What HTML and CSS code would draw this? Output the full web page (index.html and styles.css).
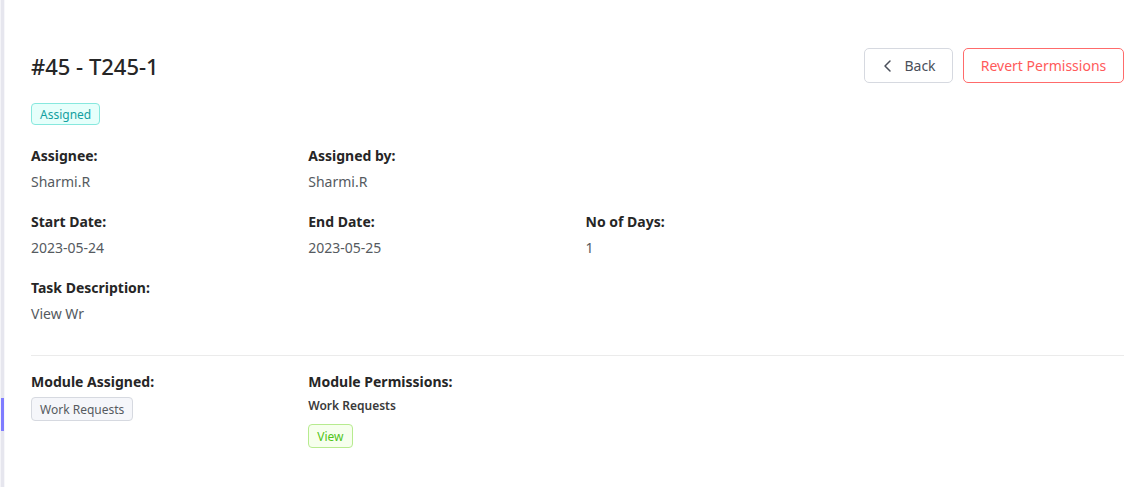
FILE: index.html
```html
<!DOCTYPE html>
<html>
<head>
<meta charset="utf-8">
<link rel="stylesheet" href="styles.css">
</head>
<body>
<div class="page">
  <div class="rail"><div class="rail-thumb"></div></div>
  <main class="main">
    <header class="header">
      <h1 class="title">#45 - T245-1</h1>
      <div class="actions">
        <button class="btn btn-back">
          <svg class="chev" width="14" height="14" viewBox="0 0 14 14"><path d="M9 2 L4 7 L9 12" fill="none" stroke="#4a4f5a" stroke-width="1.5" stroke-linecap="round" stroke-linejoin="round"/></svg>
          <span>Back</span>
        </button>
        <button class="btn btn-danger">Revert Permissions</button>
      </div>
    </header>
    <span class="tag tag-cyan">Assigned</span>

    <section class="grid">
      <div class="field"><div class="label">Assignee:</div><div class="value">Sharmi.R</div></div>
      <div class="field"><div class="label">Assigned by:</div><div class="value">Sharmi.R</div></div>
      <div class="field empty"></div>
      <div class="field empty"></div>

      <div class="field"><div class="label">Start Date:</div><div class="value">2023-05-24</div></div>
      <div class="field"><div class="label">End Date:</div><div class="value">2023-05-25</div></div>
      <div class="field"><div class="label">No of Days:</div><div class="value">1</div></div>
      <div class="field empty"></div>

      <div class="field"><div class="label">Task Description:</div><div class="value">View Wr</div></div>
    </section>

    <hr class="divider">

    <section class="grid modules">
      <div class="field">
        <div class="label">Module Assigned:</div>
        <span class="tag tag-gray">Work Requests</span>
      </div>
      <div class="field">
        <div class="label">Module Permissions:</div>
        <div class="perm-name">Work Requests</div>
        <span class="tag tag-green">View</span>
      </div>
    </section>
  </main>
</div>
</body>
</html>
```

FILE: styles.css
```css
* { box-sizing: border-box; }
html, body { margin: 0; padding: 0; background: #fff; }
body {
  font-family: "Noto Sans", "Open Sans", sans-serif;
  font-size: 14px;
  color: #262626;
}
.page { display: flex; min-height: 487px; }
.rail {
  width: 5px;
  flex: none;
  background: linear-gradient(to right, #f4f4f8 0, #f4f4f8 1px, #e6e6ee 1px, #e6e6ee 4px, #f7f7fa 4px);
  position: relative;
}
.rail-thumb {
  position: absolute;
  left: 1px;
  width: 3px;
  top: 398px;
  height: 33px;
  background: #7f7cff;
}
.main { flex: 1; padding: 48px 12px 0 26px; }
.header {
  display: flex;
  justify-content: space-between;
  align-items: center;
  height: 35px;
}
.title {
  margin: 0;
  font-size: 22px;
  font-weight: 500;
  color: #262626;
  letter-spacing: 0;
}
.actions { display: flex; gap: 10px; }
.btn {
  font-family: inherit;
  font-size: 14px;
  height: 35px;
  border-radius: 5px;
  background: #fff;
  padding: 0 16px;
  display: inline-flex;
  align-items: center;
  cursor: pointer;
}
.btn-back {
  width: 89px;
  border: 1px solid #d6d9e0;
  color: #4a4f5a;
  gap: 9px;
  justify-content: center;
}
.btn-danger {
  width: 161px;
  border: 1px solid #ff6b6b;
  color: #ff5a5a;
  justify-content: center;
}
.tag {
  display: inline-flex;
  align-items: center;
  height: 22px;
  padding: 0 8px;
  font-size: 12px;
  border-radius: 4px;
  border: 1px solid;
}
.tag-cyan {
  margin-top: 20px;
  background: #e6fffb;
  border-color: #87e8de;
  color: #13a0a0;
}
.grid {
  display: grid;
  grid-template-columns: repeat(4, 1fr);
  column-gap: 16px;
  row-gap: 18px;
  margin-top: 20px;
}
.label {
  font-weight: 700;
  line-height: 22px;
  color: #262626;
}
.value {
  margin-top: 4px;
  line-height: 22px;
  color: #555a60;
}
.divider {
  border: 0;
  border-top: 1px solid #ebebeb;
  margin: 30px 0 15px;
}
.grid.modules { margin-top: 0; }
.modules .label { margin-bottom: 4px; }
.tag-gray {
  height: 24px;
  padding: 0 8px;
  background: #f5f6fa;
  border-color: #d6d9e0;
  color: #555a60;
}
.perm-name {
  font-size: 12px;
  font-weight: 600;
  color: #3a3a3a;
  line-height: 18px;
}
.tag-green {
  margin-top: 9px;
  height: 24px;
  padding: 0 8px;
  background: #f6ffed;
  border-color: #b7eb8f;
  color: #52c41a;
}
```
